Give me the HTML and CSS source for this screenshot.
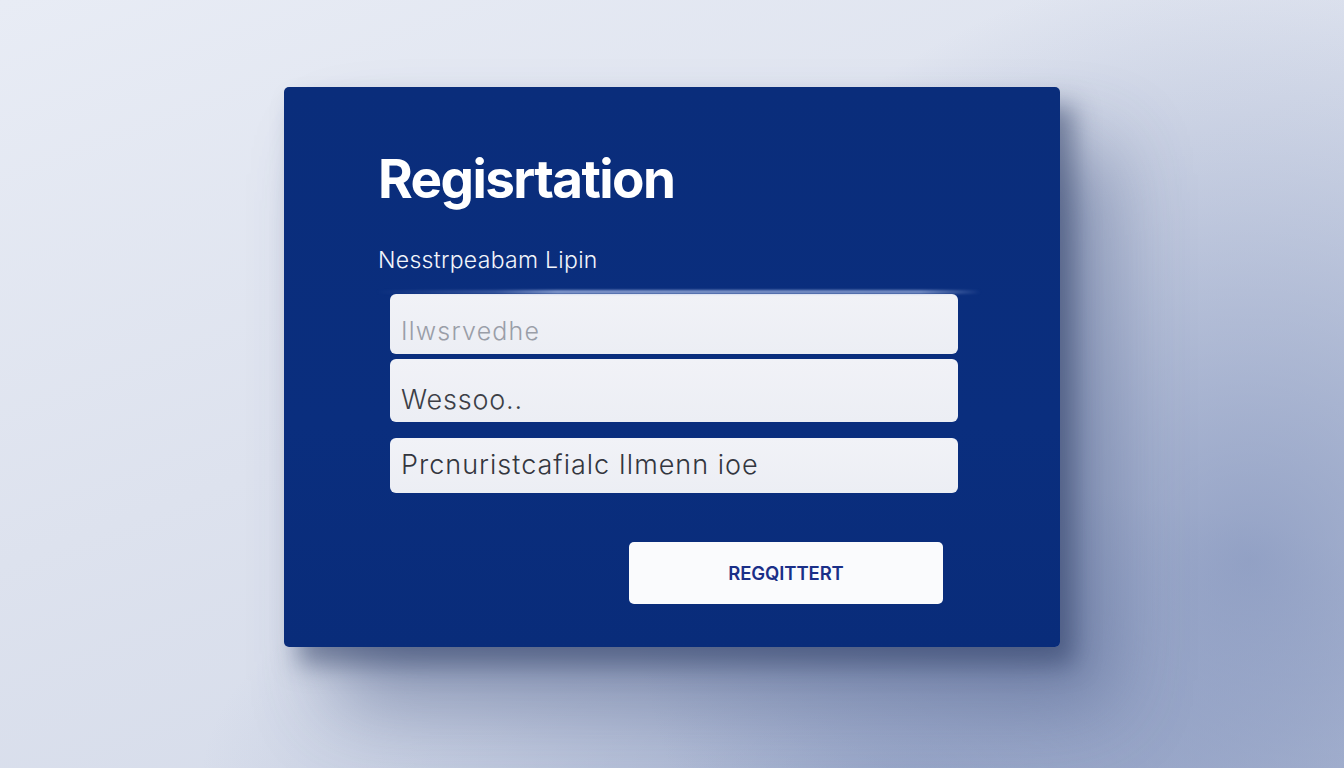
FILE: index.html
```html
<!DOCTYPE html>
<html lang="en">

<head>
    <meta charset="UTF-8">
    <meta name="viewport" content="width=device-width, initial-scale=1.0">
    <title>Registration</title>
    <link rel="stylesheet" href="styles.css">
</head>

<body>
    <main class="card">
        <h1 class="title">Regisrtation</h1>
        <p class="subtitle">Nesstrpeabam Lipin</p>
        <div class="glow"></div>
        <section class="fields">
            <div class="field field-name">Ilwsrvedhe</div>
            <div class="field field-pass">Wessoo..</div>
            <div class="field field-extra">Prcnuristcafialc Ilmenn ioe</div>
        </section>
        <button class="submit" type="button">REGQITTERT</button>
    </main>
</body>

</html>
```

FILE: styles.css
```css
html,
body {
    margin: 0;
    height: 100%;
}

body {
    background:
        radial-gradient(ellipse 620px 600px at 1250px 560px, rgba(120, 138, 182, 0.7), rgba(120, 138, 182, 0) 100%),
        radial-gradient(ellipse 700px 300px at 900px 780px, rgba(120, 138, 182, 0.55), rgba(120, 138, 182, 0) 100%),
        linear-gradient(160deg, #e8ecf5 0%, #dde2ee 45%, #d0d7e7 100%);
    font-family: Inter, "Noto Sans", sans-serif;
    padding-top: 87px;
    box-sizing: border-box;
    overflow: hidden;
}

.card {
    box-sizing: border-box;
    width: 776px;
    height: 560px;
    margin: 0 auto;
    padding: 60px 102px 0 94px;
    background: linear-gradient(180deg, #0a2d7b 0%, #0a2e7e 60%, #092c7a 100%);
    border-radius: 5px;
    box-shadow:
        14px 18px 24px rgba(40, 55, 95, 0.5),
        50px 60px 80px rgba(60, 78, 125, 0.45);
    display: flex;
    flex-direction: column;
}

.title {
    margin: 0;
    color: #fff;
    font-size: 53px;
    line-height: 64px;
    font-weight: 700;
    letter-spacing: -1.6px;
}

.subtitle {
    margin: 35px 0 0;
    color: #f2f5fb;
    font-size: 23px;
    line-height: 28px;
    font-weight: 300;
    letter-spacing: 0.3px;
}

.glow {
    height: 4px;
    width: 606px;
    margin: 16px 0 0 -3px;
    border-radius: 2px;
    background: linear-gradient(90deg, rgba(150, 170, 220, 0) 0%, rgba(140, 160, 215, 0.35) 20%, rgba(170, 188, 230, 0.75) 30%, rgba(160, 180, 225, 0.7) 90%, rgba(150, 170, 220, 0) 100%);
    filter: blur(1px);
}

.fields {
    margin: 0 0 0 12px;
    width: 568px;
    display: flex;
    flex-direction: column;
}

.field {
    box-sizing: border-box;
    background: linear-gradient(180deg, #f1f2f7, #eceef4);
    border-radius: 6px;
    padding-left: 11px;
    color: #3a3d45;
    white-space: nowrap;
}

.field-name {
    height: 60px;
    padding-top: 23px;
    font-size: 25px;
    line-height: 29px;
    font-weight: 300;
    color: #9a9ea8;
    letter-spacing: 1.2px;
}

.field-pass {
    height: 63px;
    margin-top: 5px;
    padding-top: 25px;
    font-size: 27px;
    line-height: 32px;
    font-weight: 300;
    color: #3c3f47;
    letter-spacing: 0.8px;
}

.field-extra {
    height: 55px;
    margin-top: 16px;
    padding-top: 11px;
    font-size: 27px;
    line-height: 32px;
    font-weight: 300;
    color: #33363e;
    letter-spacing: 1px;
}

.submit {
    align-self: flex-start;
    margin: 49px 0 0 251px;
    width: 314px;
    height: 62px;
    border: none;
    border-radius: 5px;
    background: #fafbfd;
    color: #1a2f88;
    font-family: Inter, "Noto Sans", sans-serif;
    font-size: 18.5px;
    font-weight: 600;
    line-height: 62px;
    padding: 0;
    letter-spacing: -0.1px;
}
```
